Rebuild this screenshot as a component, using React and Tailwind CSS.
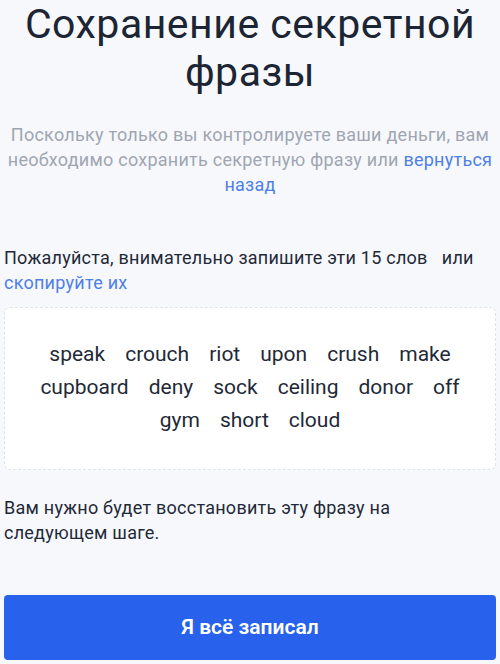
import React from "react";

const words = [
  "speak", "crouch", "riot", "upon", "crush", "make",
  "cupboard", "deny", "sock", "ceiling", "donor", "off",
  "gym", "short", "cloud",
];

export default function App() {
  return (
    <div
      className="min-h-screen bg-[#f6f8fc] px-1 text-[#1f2937]"
      style={{ fontFamily: "Roboto, 'Noto Sans', sans-serif" }}
    >
      <h1 className="text-center text-[41px] leading-[48px] font-normal tracking-[0.5px] text-[#1c2533]">
        Сохранение секретной фразы
      </h1>

      <p className="mt-[26px] text-center text-[18px] leading-[25px] tracking-[0.25px] text-[#a0a6b1]">
        Поскольку только вы контролируете ваши деньги, вам необходимо
        сохранить секретную фразу или{" "}
        <a href="#" className="text-[#4f7fe6]">вернуться назад</a>
      </p>

      <p className="mt-[48px] text-[18px] leading-[25px] tracking-[0.25px] text-[#1f2937]">
        Пожалуйста, внимательно запишите эти 15 слов{"\u00a0\u00a0 "}или{" "}
        <a href="#" className="text-[#4f7fe6]">скопируйте их</a>
      </p>

      <div className="mt-[12px] rounded-md border border-dashed border-[#dfe3ea] bg-white px-4 pt-[30px] pb-[32px]">
        <div className="flex flex-wrap justify-center gap-x-[20px] text-[21px] leading-[33px] text-[#1f2937]">
          {words.map((w) => (
            <span key={w}>{w}</span>
          ))}
        </div>
      </div>

      <p className="mt-[25px] pr-24 text-[18px] leading-[25px] tracking-[0.25px] text-[#1f2937]">
        Вам нужно будет восстановить эту фразу на следующем шаге.
      </p>

      <button className="mt-[50px] flex h-[65px] w-full items-center justify-center rounded-[4px] bg-[#2761ec] text-[21px] font-semibold text-white">
        Я всё записал
      </button>
    </div>
  );
}
